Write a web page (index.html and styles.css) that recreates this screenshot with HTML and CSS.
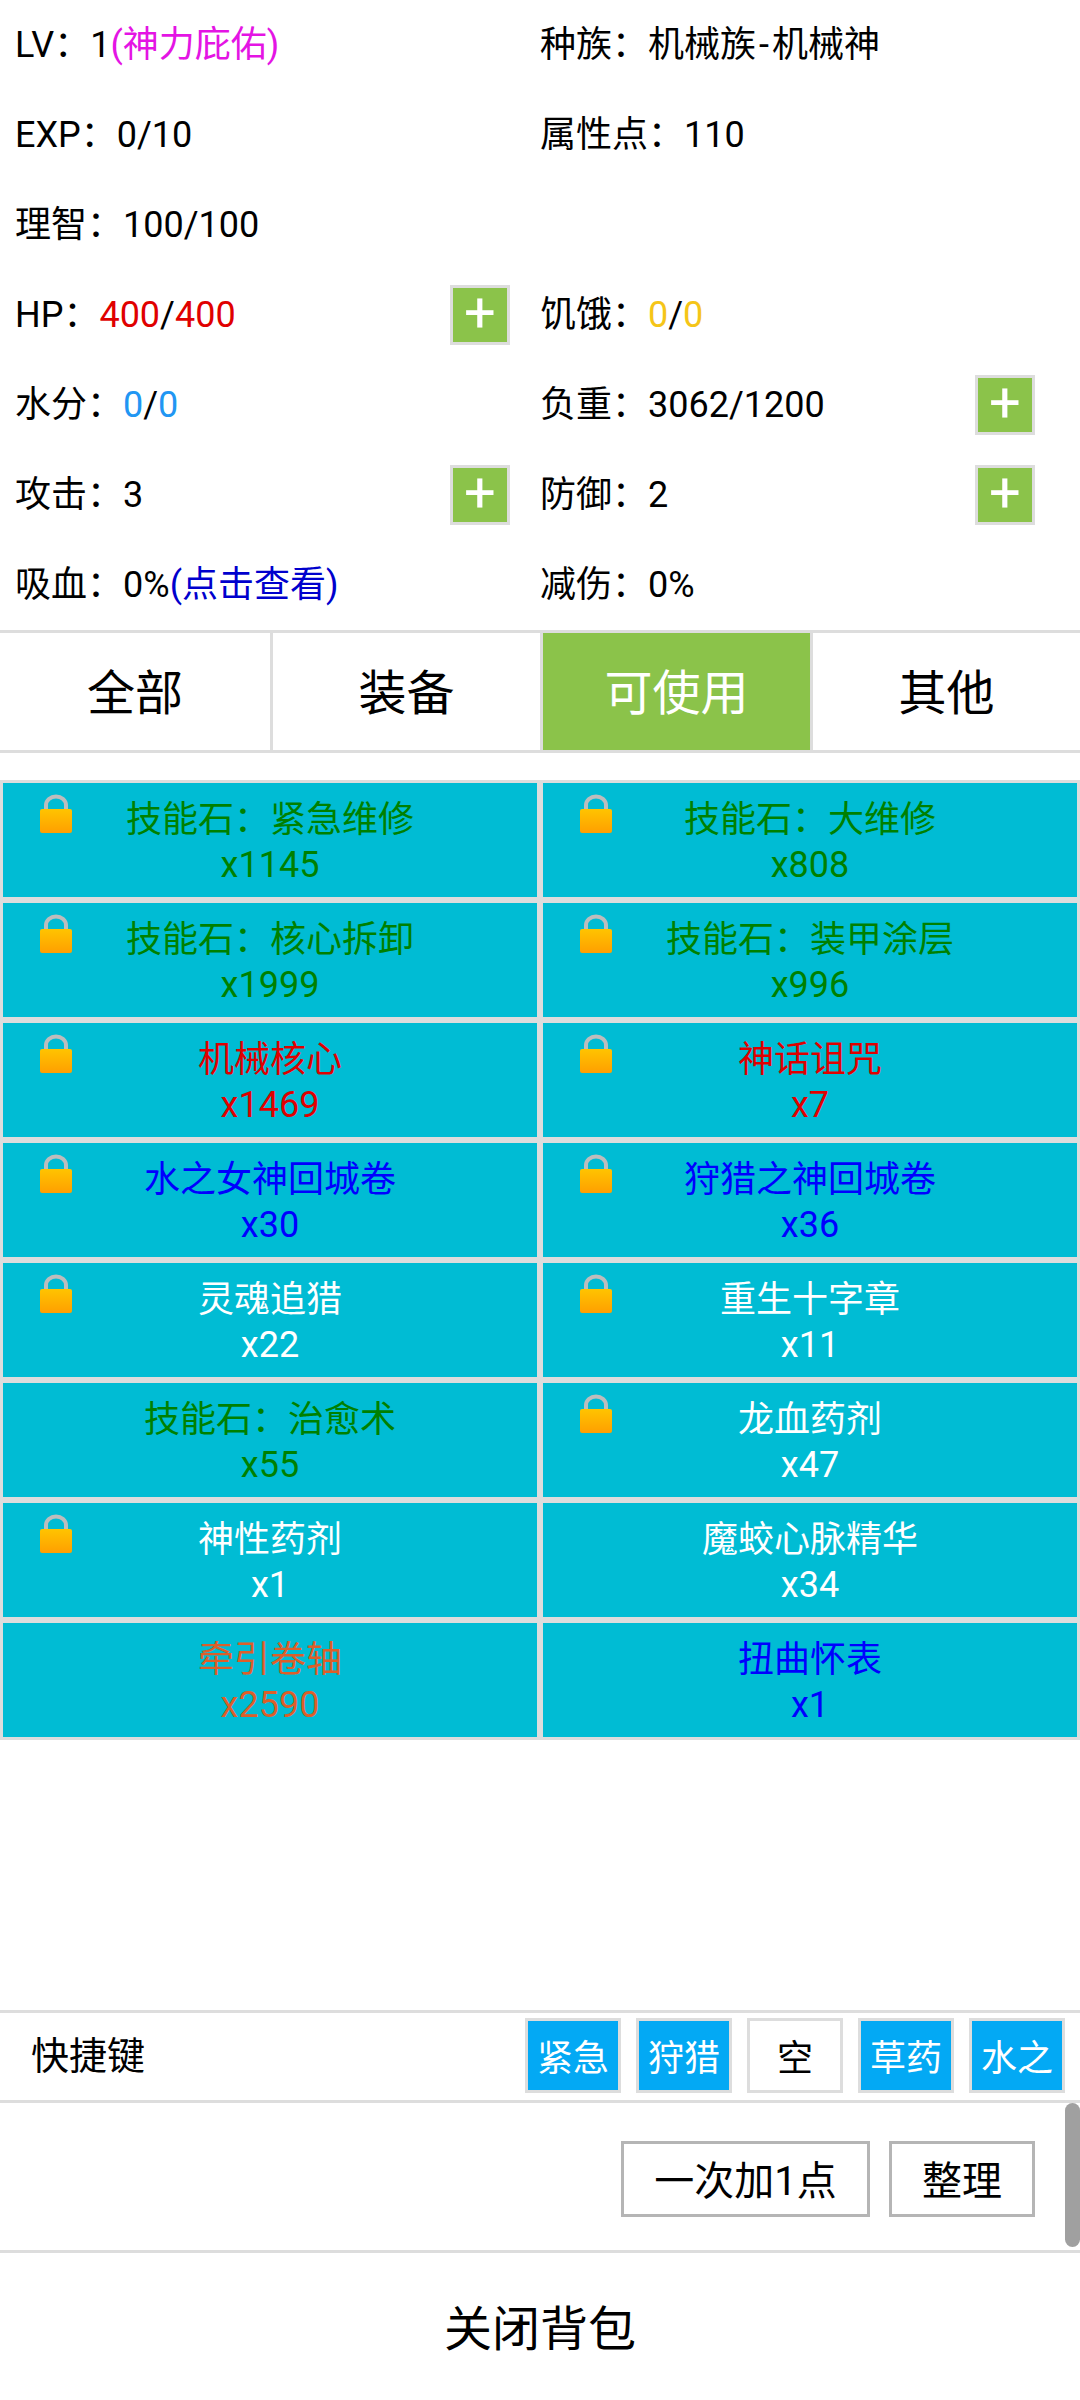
FILE: index.html
```html
<!DOCTYPE html>
<html lang="zh">
<head>
<meta charset="utf-8">
<title>背包</title>
<link rel="stylesheet" href="styles.css">
</head>
<body>
<svg class="defs" width="0" height="0" aria-hidden="true">
  <defs>
    <linearGradient id="lockfill" x1="0" y1="0" x2="0" y2="1">
      <stop offset="0" stop-color="#ffc400"/>
      <stop offset="1" stop-color="#ff9f00"/>
    </linearGradient>
    <symbol id="lock" viewBox="0 0 32 39">
      <path d="M6 17V11a10 8.500 0 0 1 20 0v6" fill="none" stroke="#bdbdbd" stroke-width="4"/>
      <rect x="0" y="15" width="32" height="24" rx="2" fill="url(#lockfill)"/>
    </symbol>
  </defs>
</svg>
<main class="page">
  <section class="stats">
    <div class="stat"><span class="text"><span class="label">LV：</span>1<span class="magenta">(神力庇佑)</span></span></div>
    <div class="stat right"><span class="text"><span class="label">种族：</span>机械族<span class="hyphen">-</span>机械神</span></div>
    <div class="stat"><span class="text"><span class="label">EXP：</span>0/10</span></div>
    <div class="stat right"><span class="text"><span class="label">属性点：</span>110</span></div>
    <div class="stat"><span class="text"><span class="label">理智：</span>100/100</span></div>
    <div class="stat right"></div>
    <div class="stat"><span class="text"><span class="label">HP：</span><span class="red">400</span>/<span class="red">400</span></span><button class="plus">+</button></div>
    <div class="stat right"><span class="text"><span class="label">饥饿：</span><span class="yellow">0</span>/<span class="yellow">0</span></span></div>
    <div class="stat"><span class="text"><span class="label">水分：</span><span class="sky">0</span>/<span class="sky">0</span></span></div>
    <div class="stat right"><span class="text"><span class="label">负重：</span>3062/1200</span><button class="plus">+</button></div>
    <div class="stat"><span class="text"><span class="label">攻击：</span>3</span><button class="plus">+</button></div>
    <div class="stat right"><span class="text"><span class="label">防御：</span>2</span><button class="plus">+</button></div>
    <div class="stat"><span class="text"><span class="label">吸血：</span>0%<span class="link">(点击查看)</span></span></div>
    <div class="stat right"><span class="text"><span class="label">减伤：</span>0%</span></div>
  </section>

  <nav class="tabs">
    <div class="tab"><span class="tab-text">全部</span></div>
    <div class="tab"><span class="tab-text">装备</span></div>
    <div class="tab active"><span class="tab-text">可使用</span></div>
    <div class="tab"><span class="tab-text">其他</span></div>
  </nav>

  <section class="items">
    <div class="item green"><svg class="lock"><use href="#lock"/></svg><span>技能石：紧急维修</span><span>x1145</span></div>
    <div class="item green"><svg class="lock"><use href="#lock"/></svg><span>技能石：大维修</span><span>x808</span></div>
    <div class="item green"><svg class="lock"><use href="#lock"/></svg><span>技能石：核心拆卸</span><span>x1999</span></div>
    <div class="item green"><svg class="lock"><use href="#lock"/></svg><span>技能石：装甲涂层</span><span>x996</span></div>
    <div class="item crimson"><svg class="lock"><use href="#lock"/></svg><span>机械核心</span><span>x1469</span></div>
    <div class="item crimson"><svg class="lock"><use href="#lock"/></svg><span>神话诅咒</span><span>x7</span></div>
    <div class="item blue"><svg class="lock"><use href="#lock"/></svg><span>水之女神回城卷</span><span>x30</span></div>
    <div class="item blue"><svg class="lock"><use href="#lock"/></svg><span>狩猎之神回城卷</span><span>x36</span></div>
    <div class="item white"><svg class="lock"><use href="#lock"/></svg><span>灵魂追猎</span><span>x22</span></div>
    <div class="item white"><svg class="lock"><use href="#lock"/></svg><span>重生十字章</span><span>x11</span></div>
    <div class="item green"><span>技能石：治愈术</span><span>x55</span></div>
    <div class="item white"><svg class="lock"><use href="#lock"/></svg><span>龙血药剂</span><span>x47</span></div>
    <div class="item white"><svg class="lock"><use href="#lock"/></svg><span>神性药剂</span><span>x1</span></div>
    <div class="item white"><span>魔蛟心脉精华</span><span>x34</span></div>
    <div class="item orange"><span>牵引卷轴</span><span>x2590</span></div>
    <div class="item blue"><span>扭曲怀表</span><span>x1</span></div>
  </section>

  <section class="shortcuts">
    <div class="shortcut-title">快捷键</div>
    <div class="shortcut-list">
      <button class="key filled">紧急</button>
      <button class="key filled">狩猎</button>
      <button class="key">空</button>
      <button class="key filled">草药</button>
      <button class="key filled">水之</button>
    </div>
  </section>

  <section class="actions">
    <button class="action wide">一次加1点</button>
    <button class="action narrow">整理</button>
    <div class="scrollbar"></div>
  </section>

  <footer class="close">关闭背包</footer>
</main>
</body>
</html>
```

FILE: styles.css
```css
* {
  box-sizing: border-box;
}

html,
body {
  margin: 0;
  padding: 0;
  background: #fff;
}

body {
  font-family: Roboto, "Noto Sans CJK SC", sans-serif;
  font-size: 36px;
  color: #000;
}

.defs {
  position: absolute;
}

.page {
  width: 1080px;
  height: 2400px;
  display: flex;
  flex-direction: column;
}

.stats {
  height: 630px;
  display: grid;
  grid-template-columns: 540px 540px;
  grid-auto-rows: 90px;
}

.stat {
  display: flex;
  align-items: center;
  padding: 0 30px 0 15px;
  white-space: nowrap;
}

.stat.right {
  padding: 0 45px 0 0;
}

.text {
  display: block;
  line-height: 46px;
}

.hyphen {
  margin: 0 3px;
}

.plus {
  margin-left: auto;
  width: 60px;
  height: 60px;
  padding: 0 0 4px;
  border: 3px solid #ddd;
  background: #8bc34a;
  color: #fff;
  font-family: Roboto, sans-serif;
  font-size: 56px;
  line-height: 1;
  display: flex;
  align-items: center;
  justify-content: center;
}

.magenta { color: #e414e4; }
.red { color: #e00000; }
.yellow { color: #f5c518; }
.sky { color: #2196f3; }
.link { color: #0000cd; }

.tabs {
  height: 123px;
  display: grid;
  grid-template-columns: repeat(4, 270px);
  border-top: 3px solid #ddd;
  border-bottom: 3px solid #ddd;
}

.tab {
  display: flex;
  align-items: center;
  justify-content: center;
  font-size: 48px;
  border-left: 3px solid #ddd;
}

.tab:first-child {
  border-left: 0;
}

.tab-text {
  padding-bottom: 5px;
}

.tab.active {
  background: #8bc34a;
  color: #fff;
}

.items {
  margin-top: 27px;
  display: grid;
  grid-template-columns: 540px 540px;
  grid-auto-rows: 120px;
}

.item {
  position: relative;
  border: 3px solid #ddd;
  background: #00bcd4;
  display: flex;
  flex-direction: column;
  align-items: center;
  justify-content: center;
  padding-top: 5px;
  line-height: 45px;
}

.item.green { color: #008000; }
.item.crimson { color: #e00000; }
.item.blue { color: #00f; }
.item.white { color: #fff; }
.item.orange { color: #dc5f2a; }

.lock {
  position: absolute;
  left: 37px;
  top: 11px;
  width: 32px;
  height: 39px;
}

.shortcuts {
  margin-top: auto;
  height: 93px;
  border-top: 3px solid #ddd;
  border-bottom: 3px solid #ddd;
  display: flex;
  align-items: center;
  justify-content: space-between;
  padding: 0 15px 3px 31px;
}

.shortcut-title {
  font-size: 38px;
  padding-bottom: 5px;
}

.shortcut-list {
  display: flex;
  gap: 15px;
}

.key {
  width: 96px;
  height: 75px;
  padding: 0;
  border: 3px solid #ddd;
  background: #fff;
  color: #000;
  font: inherit;
}

.key.filled {
  background: #03a9f4;
  color: #fff;
}

.actions {
  position: relative;
  flex: 0 0 150px;
  border-bottom: 3px solid #ddd;
  display: flex;
  align-items: center;
  justify-content: flex-end;
  gap: 19px;
  padding: 5px 45px 0 0;
}

.action {
  height: 76px;
  padding: 0 0 3px;
  border: 3px solid #b5b5b5;
  background: #fff;
  color: #000;
  font: inherit;
  font-size: 40px;
}

.action.wide { width: 249px; }
.action.narrow { width: 146px; }

.scrollbar {
  position: absolute;
  right: 0;
  top: 0;
  width: 15px;
  height: 144px;
  border-radius: 8px;
  background: #a0a0a0;
}

.close {
  flex: 0 0 147px;
  display: flex;
  align-items: center;
  justify-content: center;
  padding-bottom: 3px;
  font-size: 48px;
}
```
